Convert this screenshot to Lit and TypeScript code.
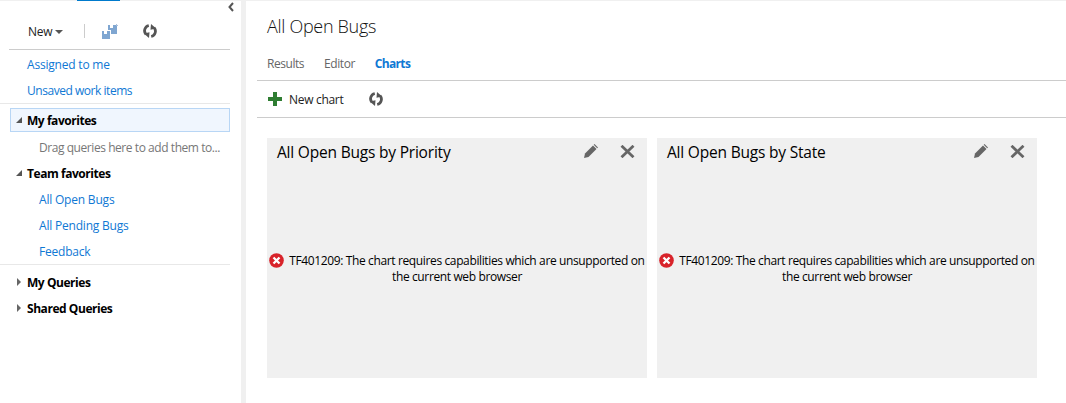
import { LitElement, html, css, svg } from "lit";
import { customElement } from "lit/decorators.js";

const refreshIcon = svg`<svg class="icon" width="14" height="14" viewBox="0 0 14 14">
  <path d="M5.800 1.500A5.400 5.400 0 0 0 3 10.400" stroke="#555" stroke-width="2.800" fill="none"/>
  <path d="M.8 9.500L6.500 8.200 6 14z" fill="#555"/>
  <path d="M8.200 12.500A5.400 5.400 0 0 0 11 3.600" stroke="#555" stroke-width="2.800" fill="none"/>
  <path d="M13.200 4.500L7.500 5.800 8 0z" fill="#555"/>
</svg>`;

const saveIcon = svg`<svg class="icon" width="16" height="15" viewBox="0 0 16 15">
  <path d="M0 7h2v3h3V7h3v8H0z" fill="#7fa6d1"/>
  <path d="M6 1h2v3h3V1h4v9H9V6H6z" fill="#7fa6d1"/>
  <path d="M14 0h1v1h1v1h-2z" fill="#a9c0dc"/>
</svg>`;

const pencilIcon = svg`<svg width="14" height="14" viewBox="0 0 14 14">
  <path d="M0 14l1-4.500L9 1.500l3.500 3.500L4.500 13z" fill="#666"/>
  <path d="M10.500 0l3.500 3.500-.8.8L9.700.8z" fill="#666"/>
</svg>`;

const closeIcon = svg`<svg width="15" height="13" viewBox="0 0 15 13">
  <path d="M1.500 .8l12 11.400M13.500 .8l-12 11.400" stroke="#666" stroke-width="2.800" fill="none"/>
</svg>`;

const errorIcon = svg`<svg class="err" width="15" height="15" viewBox="0 0 15 15">
  <circle cx="7.500" cy="7.500" r="7.300" fill="#d8232a"/>
  <path d="M4.500 4.500l6 6M10.500 4.500l-6 6" stroke="#fff" stroke-width="2.300" fill="none"/>
</svg>`;

const plusIcon = svg`<svg width="14" height="14" viewBox="0 0 14 14">
  <path d="M5 0h4v5h5v4H9v5H5V9H0V5h5z" fill="#2f7d32"/>
</svg>`;

@customElement("chart-card")
export class ChartCard extends LitElement {
  static properties = { heading: { type: String } };
  heading = "";

  static styles = css`
    :host {
      display: flex;
      flex-direction: column;
      width: 380px;
      height: 240px;
      background: #f0f0f0;
      color: #000;
    }
    .head {
      display: flex;
      align-items: center;
      height: 28px;
      padding: 0 12px 0 10px;
    }
    .title {
      flex: 1;
      font-size: 15.500px;
      letter-spacing: -0.2px;
    }
    .tools {
      display: flex;
      gap: 22px;
      align-items: center;
      margin-top: -2px;
    }
    .tools svg {
      display: block;
    }
    .msg {
      padding: 87px 2px 0;
      text-align: center;
      font-size: 12px;
      line-height: 16px;
      letter-spacing: -0.37px;
    }
    .err {
      vertical-align: -3px;
      margin-right: 2px;
    }
  `;

  render() {
    return html`
      <div class="head">
        <span class="title">${this.heading}</span>
        <span class="tools">${pencilIcon}${closeIcon}</span>
      </div>
      <div class="msg">
        ${errorIcon} TF401209: The chart requires capabilities which are unsupported on the current web browser
      </div>
    `;
  }
}

@customElement("app-root")
export class AppRoot extends LitElement {
  static styles = css`
    :host {
      display: flex;
      position: relative;
      width: 1066px;
      height: 403px;
      overflow: hidden;
      background: #fff;
      font-family: "Open Sans", "Noto Sans", sans-serif;
      font-size: 12px;
      color: #222;
      padding-top: 1px;
      box-sizing: border-box;
    }
    .strip {
      position: absolute;
      left: 0;
      right: 0;
      top: 0;
      height: 1px;
      background: #f0f0f0;
    }
    .tab-mark {
      position: absolute;
      left: 77px;
      top: 0;
      width: 43px;
      height: 1px;
      background: #007acc;
    }
    .side {
      width: 241px;
      flex: none;
      box-sizing: border-box;
      padding-top: 1px;
    }
    .splitter {
      width: 5px;
      flex: none;
      background: #f0f0f0;
    }
    .collapse {
      display: flex;
      justify-content: flex-end;
      padding-right: 7px;
      height: 14px;
    }
    .bar {
      display: flex;
      align-items: center;
      height: 30px;
      margin: 0 11px 1px 9px;
      padding: 0 0 3px 19px;
      border-bottom: 1px solid #ccc;
    }
    .new {
      display: flex;
      align-items: center;
      gap: 3px;
      letter-spacing: -0.2px;
      margin-right: 21px;
    }
    .caret {
      width: 0;
      height: 0;
      border: 4px solid transparent;
      border-top-color: #555;
      border-bottom: 0;
      margin-top: 1px;
    }
    .sep {
      width: 1px;
      height: 14px;
      background: #ccc;
      margin-right: 17px;
    }
    .bar .icon {
      display: block;
    }
    .bar .refresh {
      margin-left: 25px;
    }
    .row {
      display: flex;
      align-items: center;
      height: 26px;
      letter-spacing: -0.2px;
      white-space: nowrap;
      box-sizing: border-box;
    }
    .link {
      color: #0f78d4;
    }
    .lvl0 {
      padding-left: 27px;
    }
    .lvl1 {
      padding-left: 39px;
    }
    .wide {
      letter-spacing: -0.46px;
    }
    .hint {
      color: #777;
      letter-spacing: -0.44px;
    }
    .group {
      padding-left: 15px;
      font-weight: 700;
      color: #000;
      letter-spacing: -0.45px;
    }
    .selected {
      margin: 4px 11px 0 10px;
      padding-left: 4px;
      height: 24px;
      background: #f0f6fe;
      border: 1px solid #b8d6f5;
    }
    .drag {
      margin-top: 2px;
    }
    .tri {
      width: 12px;
      flex: none;
      display: flex;
      align-items: center;
    }
    .open {
      width: 0;
      height: 0;
      border-left: 6px solid transparent;
      border-bottom: 6px solid #555;
      margin-left: 1px;
    }
    .closed {
      width: 0;
      height: 0;
      border-top: 4px solid transparent;
      border-bottom: 4px solid transparent;
      border-left: 4px solid #666;
      margin-left: 2px;
    }
    hr {
      border: 0;
      height: 1px;
      background: #e8e8e8;
      margin: 0 11px 0 0;
    }
    .queries {
      margin-top: 4px;
    }
    .main {
      flex: 1;
      min-width: 0;
      padding-left: 11px;
    }
    h1 {
      margin: 0;
      height: 46px;
      padding: 2px 0 0 10px;
      display: flex;
      align-items: center;
      font-size: 18px;
      font-weight: 300;
      color: #111;
      letter-spacing: -0.3px;
    }
    .tabs {
      display: flex;
      gap: 20px;
      align-items: center;
      height: 29px;
      padding: 0 0 2px 10px;
      border-bottom: 1px solid #ccc;
      color: #666;
      letter-spacing: -0.45px;
    }
    .tabs .on {
      color: #0f78d4;
      font-weight: 700;
      letter-spacing: -0.68px;
    }
    .tools {
      display: flex;
      align-items: center;
      height: 36px;
      padding-left: 11px;
      border-bottom: 1px solid #ccc;
      letter-spacing: -0.3px;
    }
    .tools svg {
      display: block;
    }
    .tools span {
      margin: 0 26px 0 7px;
    }
    .cards {
      display: flex;
      gap: 10px;
      padding: 20px 0 0 10px;
    }
  `;

  render() {
    return html`
      <div class="strip"></div>
      <div class="tab-mark"></div>
      <aside class="side">
        <div class="collapse">
          <svg width="6" height="10" viewBox="0 0 6 10">
            <path d="M5 1L1.500 5 5 9" stroke="#555" stroke-width="2" fill="none" />
          </svg>
        </div>
        <div class="bar">
          <span class="new">New <i class="caret"></i></span>
          <i class="sep"></i>
          ${saveIcon}
          <span class="icon refresh">${refreshIcon}</span>
        </div>
        <div class="row link lvl0">Assigned to me</div>
        <div class="row link lvl0 wide">Unsaved work items</div>
        <hr />
        <div class="row group selected">
          <span class="tri"><i class="open"></i></span>My favorites
        </div>
        <div class="row hint lvl1 drag">Drag queries here to add them to...</div>
        <div class="row group"><span class="tri"><i class="open"></i></span>Team favorites</div>
        <div class="row link lvl1">All Open Bugs</div>
        <div class="row link lvl1">All Pending Bugs</div>
        <div class="row link lvl1">Feedback</div>
        <hr />
        <div class="row group queries"><span class="tri"><i class="closed"></i></span>My Queries</div>
        <div class="row group"><span class="tri"><i class="closed"></i></span>Shared Queries</div>
      </aside>
      <div class="splitter"></div>
      <main class="main">
        <h1>All Open Bugs</h1>
        <nav class="tabs">
          <a>Results</a>
          <a>Editor</a>
          <a class="on">Charts</a>
        </nav>
        <div class="tools">
          ${plusIcon}
          <span>New chart</span>
          ${refreshIcon}
        </div>
        <div class="cards">
          <chart-card heading="All Open Bugs by Priority"></chart-card>
          <chart-card heading="All Open Bugs by State"></chart-card>
        </div>
      </main>
    `;
  }
}
